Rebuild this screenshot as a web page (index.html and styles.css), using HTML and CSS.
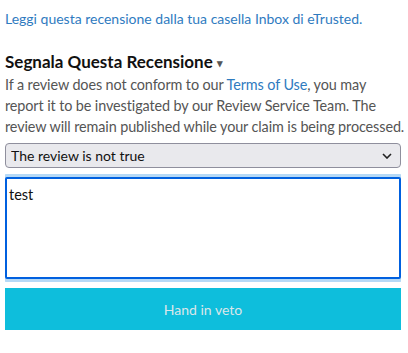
FILE: index.html
```html
<!DOCTYPE html>
<html lang="it">
<head>
  <meta charset="UTF-8">
  <meta name="viewport" content="width=device-width, initial-scale=1.0">
  <title>Segnala Questa Recensione</title>
  <link rel="stylesheet" href="styles.css">
</head>
<body>
  <div class="container">
    <p class="inbox-link"><a href="#">Leggi questa recensione dalla tua casella Inbox di eTrusted.</a></p>

    <!-- Report Form -->
    <div id="report-form">
      <h2 class="report-title">Segnala Questa Recensione <span class="caret">&#9662;</span></h2>
      <p class="report-text">If a review does not conform to our <a href="#">Terms of Use</a>, you may report it to be investigated by our Review Service Team. The review will remain published while your claim is being processed.</p>
      <form id="report">
        <div class="select-wrap">
          <select id="reason">
            <option>The review is not true</option>
            <option>The review is offensive</option>
            <option>Other</option>
          </select>
          <svg class="chevron" width="10" height="6" viewBox="0 0 10 6"><path d="M1 1l4 4 4-4" fill="none" stroke="#222" stroke-width="1.6"/></svg>
        </div>
        <div class="textarea-wrap">
          <textarea id="comment">test</textarea>
        </div>
        <button type="submit">Hand in veto</button>
      </form>
    </div>
  </div>
</body>
</html>
```

FILE: styles.css
```css
body {
  font-family: Lato, "Open Sans", sans-serif;
  margin: 0;
  background: white;
  color: #555;
}

.container {
  padding: 0 7px 0 5px;
}

.inbox-link {
  margin: 9px 0 0;
  font-size: 14px;
  line-height: 20px;
}

a {
  color: #2f7bbf;
  text-decoration: none;
}

.report-title {
  margin: 23px 0 0;
  font-size: 17px;
  line-height: 20px;
  font-weight: 700;
  color: #111;
}

.caret {
  font-size: 11px;
  color: #555;
  vertical-align: 1px;
}

.report-text {
  margin: 1px -6px 0 0;
  font-size: 14.4px;
  line-height: 21px;
  letter-spacing: -0.1px;
}

.report-text a {
  line-height: 1;
}

#report {
  margin-top: 6px;
}

.select-wrap {
  position: relative;
}

select {
  appearance: none;
  width: 100%;
  height: 25px;
  padding: 0 8px 0 5px;
  font-family: inherit;
  font-size: 14px;
  color: #111;
  background: #e9e9ed;
  border: 1px solid #8f8f9d;
  border-radius: 4px;
}

.chevron {
  position: absolute;
  right: 9px;
  top: 10px;
  pointer-events: none;
}

.textarea-wrap {
  margin-top: 6px;
  padding: 3px 0;
  overflow: hidden;
}

textarea {
  display: block;
  box-sizing: border-box;
  width: 100%;
  height: 102px;
  padding: 7px 2px 4px;
  font-family: inherit;
  font-size: 14.5px;
  color: #111;
  border: 2px solid #0060df;
  border-radius: 2px;
  outline: none;
  resize: none;
  box-shadow: 0 0 0 3px #b5d9f6;
}

button {
  display: block;
  width: 100%;
  height: 42px;
  margin-top: 6px;
  font-family: inherit;
  font-size: 14px;
  color: #dbe6ea;
  background: #0ebedc;
  border: none;
  cursor: pointer;
}
```
